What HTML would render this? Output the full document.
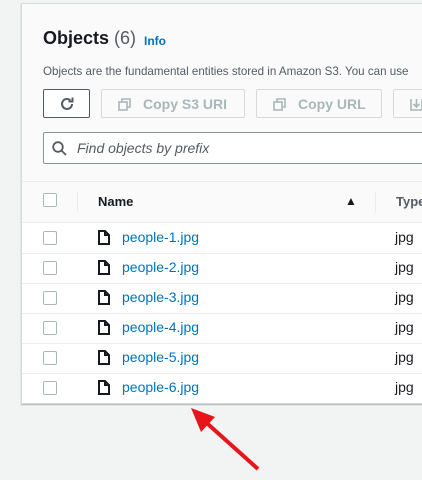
<!DOCTYPE html>
<html><head><style>
body{margin:0;width:422px;height:480px;background:#f2f3f3;font-family:"Liberation Sans",sans-serif;position:relative;overflow:hidden}
.panel{position:absolute;left:21px;top:3px;width:420px;height:399px;background:#fff;border:1px solid #d5dbdb;border-right:none;box-shadow:0 1px 1px rgba(0,28,36,.3)}
.hd{position:absolute;left:0;top:0;width:100%;height:177px;background:#fafafa;border-bottom:1px solid #eaeded}
.a{position:absolute;white-space:nowrap}
.btn{position:absolute;top:85px;height:29px;border:1px solid #d5dbdb;background:#fafafa;border-radius:2px;color:#aab7b8;font-weight:bold;font-size:14px;line-height:28px;box-sizing:border-box}
.cb{position:absolute;width:12px;height:12px;border:1px solid #aab7b8;border-radius:2px;background:#fff}
.row{position:absolute;left:0;width:100%;height:30px;border-bottom:1px solid #eaeded}
.nm{position:absolute;left:100px;color:#0073bb;font-size:14px;top:6px}
.ty{position:absolute;left:373px;font-size:14px;color:#16191f;top:6px}
.fi{position:absolute;left:76px;top:7px}
.cp{position:absolute;left:16px;top:8px}
</style></head><body>
<div class="panel">
<div class="hd">
<div class="a" style="left:21px;top:24px;font-size:18px;font-weight:bold;color:#16191f">Objects <span style="font-weight:normal;color:#545b64">(6)</span></div>
<div class="a" style="left:122px;top:30px;font-size:12px;font-weight:bold;color:#0073bb">Info</div>
<div class="a" style="left:21px;top:61px;font-size:11.6px;color:#545b64">Objects are the fundamental entities stored in Amazon S3. You can use</div>
<div class="btn" style="left:21px;width:47px;border-color:#545b64;background:#fff"><svg style="position:absolute;left:15px;top:6px" width="16" height="16" viewBox="0 0 16 16"><path d="M13 8a5 5 0 1 1-1.6-3.7" fill="none" stroke="#545b64" stroke-width="2"/><path d="M13.5 1.5v4h-4" fill="none" stroke="#545b64" stroke-width="2"/></svg></div>
<div class="btn" style="left:79px;width:144px"><svg class="cp" width="13" height="13" viewBox="0 0 13 13"><rect x="1" y="4" width="8" height="8" fill="none" stroke="#aab7b8" stroke-width="1.6"/><path d="M4 4V1h8v8H9" fill="none" stroke="#aab7b8" stroke-width="1.6"/></svg><span style="position:absolute;left:41px">Copy S3 URI</span></div>
<div class="btn" style="left:234px;width:126px"><svg class="cp" width="13" height="13" viewBox="0 0 13 13"><rect x="1" y="4" width="8" height="8" fill="none" stroke="#aab7b8" stroke-width="1.6"/><path d="M4 4V1h8v8H9" fill="none" stroke="#aab7b8" stroke-width="1.6"/></svg><span style="position:absolute;left:41px">Copy URL</span></div>
<div class="btn" style="left:371px;width:60px"><svg class="cp" width="13" height="13" viewBox="0 0 13 13"><path d="M1 1v11h11V1" fill="none" stroke="#aab7b8" stroke-width="1.6"/><path d="M6.5 1v8M3.5 6l3 3 3-3" fill="none" stroke="#aab7b8" stroke-width="1.6"/></svg></div>
<div style="position:absolute;left:21px;top:128px;width:420px;height:32px;border:1px solid #879596;border-radius:2px;background:#fff;box-sizing:border-box"><svg style="position:absolute;left:8px;top:8px" width="15" height="15" viewBox="0 0 15 15"><circle cx="6" cy="6" r="4.8" fill="none" stroke="#545b64" stroke-width="1.8"/><path d="M9.5 9.5l4.5 4.5" stroke="#545b64" stroke-width="1.8"/></svg><span class="a" style="left:33px;top:7px;font-style:italic;font-size:14px;color:#545b64">Find objects by prefix</span></div>
</div>
<div style="position:absolute;left:0;top:178px;width:100%;height:40px;background:#fafafa;border-bottom:1px solid #eaeded">
<div class="cb" style="left:21px;top:11px"></div>
<div style="position:absolute;left:55px;top:10px;width:1px;height:20px;background:#eaeded"></div>
<div class="a" style="left:76px;top:12px;font-weight:bold;font-size:13px;color:#16191f">Name</div>
<div class="a" style="left:323px;top:12px;font-size:12px;color:#16191f">▲</div>
<div style="position:absolute;left:353px;top:10px;width:1px;height:20px;background:#eaeded"></div>
<div class="a" style="left:374px;top:12px;font-weight:bold;font-size:13px;color:#545b64">Type</div>
</div>
<div class="row" style="top:219px"><div class="cb" style="left:21px;top:8px"></div><svg class="fi" width="12" height="15" viewBox="0 0 12 15"><path d="M1 1h6l4 4v9H1z" fill="none" stroke="#16191f" stroke-width="2"/><path d="M7 1v4h4" fill="none" stroke="#16191f" stroke-width="2"/></svg><span class="nm">people-1.jpg</span><span class="ty">jpg</span></div>
<div class="row" style="top:249px"><div class="cb" style="left:21px;top:8px"></div><svg class="fi" width="12" height="15" viewBox="0 0 12 15"><path d="M1 1h6l4 4v9H1z" fill="none" stroke="#16191f" stroke-width="2"/><path d="M7 1v4h4" fill="none" stroke="#16191f" stroke-width="2"/></svg><span class="nm">people-2.jpg</span><span class="ty">jpg</span></div>
<div class="row" style="top:279px"><div class="cb" style="left:21px;top:8px"></div><svg class="fi" width="12" height="15" viewBox="0 0 12 15"><path d="M1 1h6l4 4v9H1z" fill="none" stroke="#16191f" stroke-width="2"/><path d="M7 1v4h4" fill="none" stroke="#16191f" stroke-width="2"/></svg><span class="nm">people-3.jpg</span><span class="ty">jpg</span></div>
<div class="row" style="top:309px"><div class="cb" style="left:21px;top:8px"></div><svg class="fi" width="12" height="15" viewBox="0 0 12 15"><path d="M1 1h6l4 4v9H1z" fill="none" stroke="#16191f" stroke-width="2"/><path d="M7 1v4h4" fill="none" stroke="#16191f" stroke-width="2"/></svg><span class="nm">people-4.jpg</span><span class="ty">jpg</span></div>
<div class="row" style="top:339px"><div class="cb" style="left:21px;top:8px"></div><svg class="fi" width="12" height="15" viewBox="0 0 12 15"><path d="M1 1h6l4 4v9H1z" fill="none" stroke="#16191f" stroke-width="2"/><path d="M7 1v4h4" fill="none" stroke="#16191f" stroke-width="2"/></svg><span class="nm">people-5.jpg</span><span class="ty">jpg</span></div>
<div class="row" style="top:369px;border-bottom:none"><div class="cb" style="left:21px;top:8px"></div><svg class="fi" width="12" height="15" viewBox="0 0 12 15"><path d="M1 1h6l4 4v9H1z" fill="none" stroke="#16191f" stroke-width="2"/><path d="M7 1v4h4" fill="none" stroke="#16191f" stroke-width="2"/></svg><span class="nm">people-6.jpg</span><span class="ty">jpg</span></div>
</div>
<svg style="position:absolute;left:0;top:0" width="422" height="480"><path d="M258 469L200 417" stroke="#e8141b" stroke-width="4"/><path d="M191 408L215 417L201 432z" fill="#e8141b"/></svg>
</body></html>
